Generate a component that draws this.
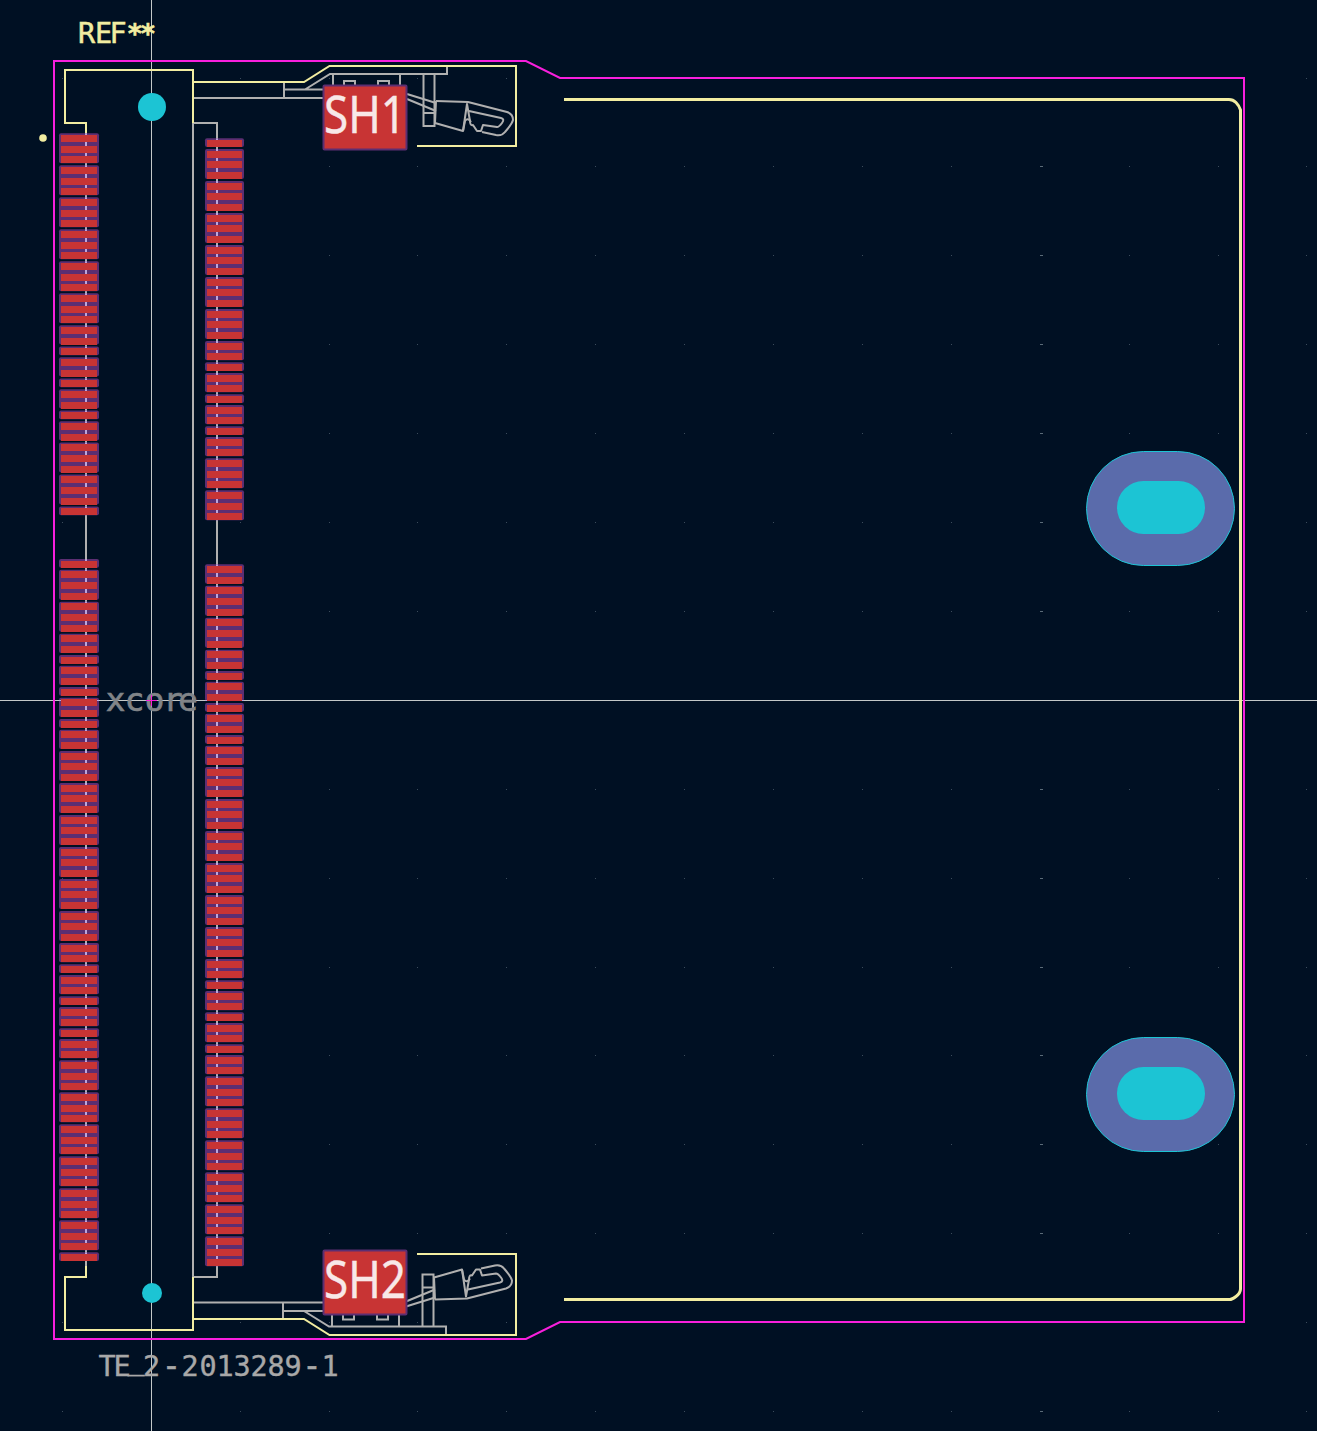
const PITCH = 32 / 3
const BG = '#001023'
const SILK = '#f2eda1'
const FAB = '#b0b0b0'
const CRTYD = '#f81fdc'
const COPPER = '#c83434'
const MASK = '#5c2e72'
const LILAC = '#bca6dc'
const HOLE = '#1cc4d4'
const MONO = '"DejaVu Sans Mono", monospace'

// pad groups: consecutive pads whose mask openings merge
const MID = [2, 1, 2, 1, 2, 1, 2]
const SIX = [3, 3, 3, 3, 3, 3]
const columns = [
    { x: 59, lineX: 86, y: 133.2, groups: [...SIX, ...MID, 3, 3, 1] },
    { x: 59, lineX: 86, y: 559, groups: [1, 3, 3, ...MID, ...SIX, ...MID, ...SIX, 1] },
    { x: 205, lineX: 217, y: 138.3, groups: [1, ...SIX, ...MID, 3, 3] },
    { x: 205, lineX: 217, y: 564.3, groups: [2, 3, 3, ...MID, ...SIX, ...MID, ...SIX] },
]

function PadColumn({ x, lineX, y, groups }: { x: number; lineX: number; y: number; groups: number[] }) {
    const width = x === 59 ? 40 : 39
    let index = 0
    return (
        <g>
            {groups.map((count, g) => {
                const top = y + index * PITCH
                const height = count * PITCH - 2
                const pads = Array.from({ length: count }, (_, i) => top + 1.7 + i * PITCH)
                index += count
                const crossesAxis = top < 701 && top + height > 700
                return (
                    <g key={g}>
                        <rect x={x} y={top} width={width} height={height} rx={2} fill={MASK} />
                        <rect x={lineX - 1} y={top} width={2} height={height} fill={LILAC} />
                        {crossesAxis && <rect x={x} y={700} width={width} height={1} fill={LILAC} />}
                        {pads.map((p) => (
                            <rect key={p} x={x + 2} y={p} width={width - 4} height={7} fill={COPPER} shapeRendering="crispEdges" />
                        ))}
                    </g>
                )
            })}
        </g>
    )
}

function Oval({ y }: { y: number }) {
    return (
        <g>
            <rect x={1086.5} y={y} width={148} height={114} rx={57} fill="#5a6bab" stroke={HOLE} strokeWidth={1} />
            <rect x={1117} y={y + 29.5} width={88} height={53} rx={26.5} fill={HOLE} />
        </g>
    )
}

// fabrication outline of the latch, drawn for the top one and mirrored for the bottom
function Latch() {
    return (
        <g fill="none" stroke={FAB} strokeWidth={2}>
            <path d="M193 98H330M284 82V98M284 89.5H325M305 89.5L330 74H447V66" />
            <path d="M333 74V90M400 74V90M423.5 74V126H434.5V74M423.5 113H434.5" />
            <path d="M344 90V81H355V90M378 90V81H389V90" />
            <g strokeLinejoin="round">
                <path d="M407 94L436 103M407 99L436 111" />
                <path d="M436 101L468 102L507 112Q513 114 513 120Q512 124 505 132Q502 136 496 135L482 132" />
                <path d="M436 101L435 123L463 131L467 104L470 121Q470 126 473 125L477 131L481 131L483 125L497 127Q499 127 502 123Q505 119 501 118L469 111" />
                <path d="M463 131L465 121Q468 117 471 122" />
            </g>
        </g>
    )
}

function ShieldPad({ y, label }: { y: number; label: string }) {
    return (
        <g>
            <rect x={323.5} y={y} width={83} height={64} rx={1} fill={COPPER} stroke={MASK} strokeWidth={2} />
            <text
                x={324}
                y={y + 47}
                textLength={82}
                lengthAdjust="spacingAndGlyphs"
                fontSize={51}
                fontFamily='"Noto Sans", sans-serif'
                fill="#f8e8e8"
                stroke="#f8e8e8"
                strokeWidth={0.4}
            >
                {label}
            </text>
        </g>
    )
}

const gridX = Array.from({ length: 15 }, (_, i) => 62.3 + i * 88.9)
const gridY = Array.from({ length: 16 }, (_, i) => 78 + i * 88.9)

export default function App() {
    return (
        <div className="h-[1431px] w-[1317px] overflow-hidden bg-[#001023]">
            <svg width={1317} height={1431} viewBox="0 0 1317 1431" className="block">
                <rect width={1317} height={1431} fill={BG} />

                {gridX.map((gx) =>
                    gridY.map((gy) => (
                        <rect
                            key={`${gx}-${gy}`}
                            x={Math.floor(gx)}
                            y={Math.floor(gy)}
                            width={Math.floor(gx) === 1040 ? 3 : 1}
                            height={1}
                            fill={Math.floor(gx) === 1040 ? '#5b6b78' : '#3c4c5c'}
                        />
                    ))
                )}

                {/* crosshair */}
                <path d="M151.5 0V1431M0 700.5H1317" stroke="#c4c8c8" strokeWidth={1} />

                {/* fab layer */}
                <path d="M86 130V1270M193 123V1277M193 123H217V1277H193" fill="none" stroke={FAB} strokeWidth={2} />
                <Latch />
                <g transform="translate(-1 1400.5) scale(1 -1)">
                    <Latch />
                </g>

                {/* courtyard */}
                <path d="M54 61H526L560 78H1244V1322H560L526 1339H54Z" fill="none" stroke={CRTYD} strokeWidth={2} />

                {/* silkscreen */}
                <g fill="none" stroke={SILK} strokeWidth={2}>
                    <path d="M86 134V123H65V70H193V123" />
                    <path d="M86 1266V1277H65V1330H193V1277" />
                    <path d="M193 82H304L329.5 66H516V146H417" />
                    <path d="M193 1319H304L329.5 1335H516V1254H417" />
                    <path
                        d="M564 99.5H1229Q1233 99.5 1236 102.5T1240.5 110V1289Q1240.5 1293 1236 1296.5T1229 1299.5H564"
                        strokeWidth={3}
                    />
                </g>
                <circle cx={43} cy={138} r={3.8} fill={SILK} />

                <circle cx={152} cy={107} r={14} fill={HOLE} />
                <circle cx={152} cy={1293} r={10} fill={HOLE} />

                {columns.map((c) => (
                    <PadColumn key={`${c.x}-${c.y}`} {...c} />
                ))}

                <ShieldPad y={85.5} label="SH1" />
                <ShieldPad y={1250.5} label="SH2" />

                <Oval y={451.5} />
                <Oval y={1037.5} />

                <text
                    x="86.5 103.5 118 135 148"
                    y={43}
                    textAnchor="middle"
                    fontSize={28.5}
                    fontFamily={MONO}
                    fill={SILK}
                    stroke={SILK}
                    strokeWidth={0.5}
                >
                    REF<tspan fontWeight={700} fontSize={27}>**</tspan>
                </text>
                <text
                    x="107 122 136 151.5 171.5 190 208 225 242 259 276 293 312 330"
                    y="1376 1376 1369 1376 1377 1376 1376 1376 1376 1376 1376 1376 1377 1376"
                    textAnchor="middle"
                    fontSize={28.5}
                    fontFamily={MONO}
                    fill="#a8a8a8"
                    stroke="#a8a8a8"
                    strokeWidth={0.4}
                >
                    TE_2<tspan fontSize={33}>-</tspan>2013289<tspan fontSize={33}>-</tspan>1
                </text>
                <text
                    x="115.5 134.5 154.5 173 188"
                    y={711}
                    textAnchor="middle"
                    fontSize={32.5}
                    fontFamily={MONO}
                    fill="#808488"
                    stroke="#808488"
                    strokeWidth={0.7}
                >
                    xcore
                </text>
                <path d="M146 700.5H157M151.5 695V706" stroke={CRTYD} strokeWidth={1} />
            </svg>
        </div>
    )
}
